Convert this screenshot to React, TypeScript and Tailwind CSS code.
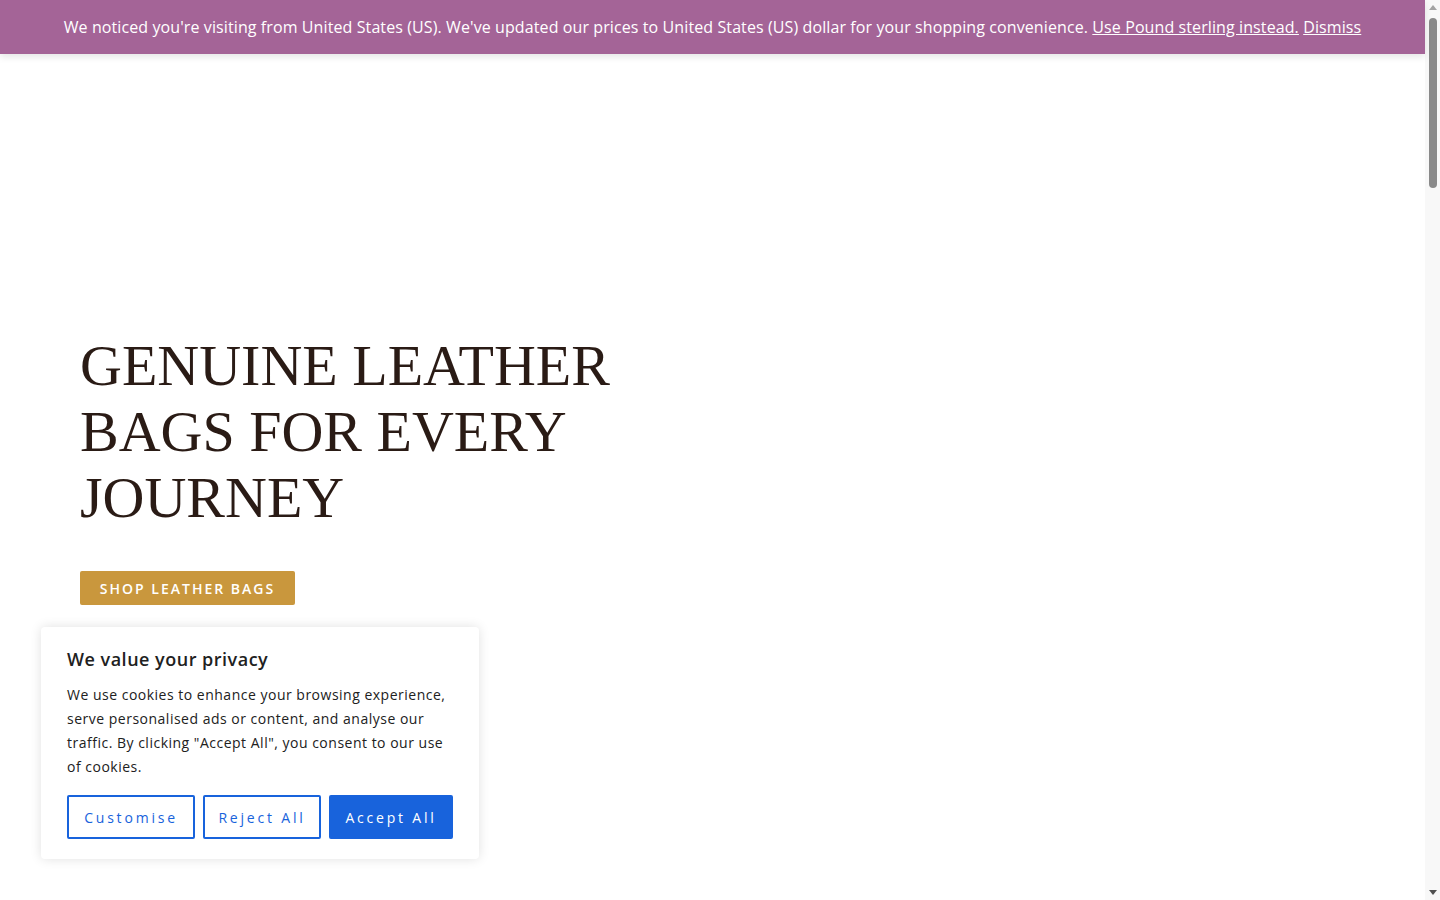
import React from "react";

export default function App() {
  return (
    <div
      className="flex h-screen overflow-hidden bg-white"
      style={{ fontFamily: "'Open Sans', 'Liberation Sans', sans-serif" }}
    >
      {/* page */}
      <div className="relative flex-1">
        {/* header (hidden under store notice) */}
        <div className="h-[60px]" />

        {/* hero */}
        <section className="pt-[273px] pl-[80px]">
          <h1
            className="text-[58px] leading-[66px] text-[#2a1b15]"
            style={{ fontFamily: "'Liberation Serif', 'DejaVu Serif', serif" }}
          >
            GENUINE LEATHER
            <br />
            BAGS FOR EVERY
            <br />
            JOURNEY
          </h1>
          <button className="mt-[40px] h-[34px] w-[215px] rounded-[2px] bg-[#c9973d] text-white text-[14px] font-semibold tracking-[2px]">
            SHOP LEATHER BAGS
          </button>
        </section>

        {/* store notice */}
        <div className="absolute top-0 left-0 right-0 h-[54px] bg-[#a46497] shadow-[0_3px_7px_rgba(0,0,0,0.10)] flex items-center justify-center text-white text-[16px] tracking-[0.1px]">
          <p>
            We noticed you're visiting from United States (US). We've updated our prices to United States (US) dollar
            for your shopping convenience. <a className="underline">Use Pound sterling instead.</a>{" "}
            <a className="underline">Dismiss</a>
          </p>
        </div>

        {/* cookie consent */}
        <div className="absolute left-[41px] top-[627px] w-[438px] rounded-[4px] bg-white shadow-[0_0_12px_rgba(0,0,0,0.12)] px-[26px] pt-[19px] pb-[20px]">
          <h2 className="text-[18px] font-semibold text-[#212121] leading-[26px] tracking-[0.5px]">
            We value your privacy
          </h2>
          <p className="mt-[11px] text-[14px] leading-[24px] text-[#212121] tracking-[0.5px]">
            We use cookies to enhance your browsing experience,
            <br />
            serve personalised ads or content, and analyse our
            <br />
            traffic. By clicking "Accept All", you consent to our use
            <br />
            of cookies.
          </p>
          <div className="mt-[16px] flex gap-[8px]">
            <button className="h-[44px] w-[128px] border-2 border-[#1863dc] rounded-[2px] text-[#1863dc] text-[14px] font-medium tracking-[2.8px]">
              Customise
            </button>
            <button className="h-[44px] w-[118px] border-2 border-[#1863dc] rounded-[2px] text-[#1863dc] text-[14px] font-medium tracking-[2.8px]">
              Reject All
            </button>
            <button className="h-[44px] w-[124px] border-2 border-[#1863dc] bg-[#1863dc] rounded-[2px] text-white text-[14px] font-medium tracking-[2.8px]">
              Accept All
            </button>
          </div>
        </div>
      </div>

      {/* scrollbar */}
      <div className="w-[15px] h-full bg-[#f8f8f8] flex flex-col items-center">
        <div className="h-[15px] flex items-center justify-center">
          <div className="w-0 h-0 border-l-[4px] border-r-[4px] border-b-[5px] border-l-transparent border-r-transparent border-b-[#a3a3a3]" />
        </div>
        <div className="mt-[3px] w-[8px] h-[170px] rounded-full bg-[#8a8a8a]" />
        <div className="flex-1" />
        <div className="h-[15px] flex items-center justify-center">
          <div className="w-0 h-0 border-l-[4px] border-r-[4px] border-t-[5px] border-l-transparent border-r-transparent border-t-[#505050]" />
        </div>
      </div>
    </div>
  );
}
